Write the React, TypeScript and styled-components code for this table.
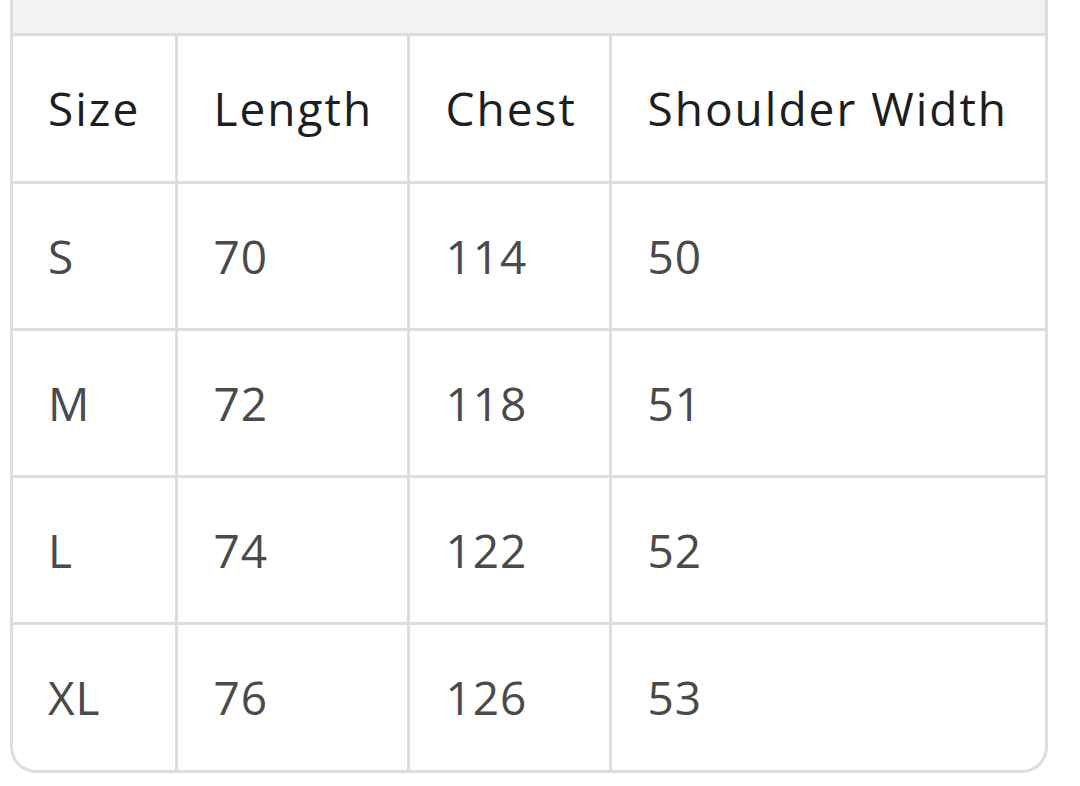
import styled, { createGlobalStyle } from 'styled-components';

// Réglages globaux de la page
const GlobalStyle = createGlobalStyle`
  html, body {
    margin: 0;
    padding: 0;
    background: #ffffff;
  }
  body {
    font-family: "Open Sans", "Noto Sans", "Liberation Sans", sans-serif;
  }
`;

// Cadre du tableau, coins arrondis en bas
const Frame = styled.div`
  margin-left: 10px;
  width: 1038px;
  box-sizing: border-box;
  border: 3px solid #dddddd;
  border-top: none;
  border-radius: 0 0 26px 26px;
  overflow: hidden;
  background: #ffffff;
`;

// Bande grise au-dessus (haut du bloc coupé)
const TopBand = styled.div`
  height: 33px;
  background: #f2f2f2;
  border-bottom: 3px solid #dddddd;
`;

const Table = styled.table`
  width: 100%;
  border-collapse: collapse;
  table-layout: fixed;
`;

const Row = styled.tr<{ $head?: boolean }>`
  height: ${p => (p.$head ? 146 : 147)}px;
`;

const HeadCell = styled.th`
  box-sizing: border-box;
  padding: 0 0 0 36px;
  text-align: left;
  font-size: 46px;
  font-weight: 400;
  letter-spacing: 2px;
  color: #1e1e1e;
  white-space: nowrap;
  border-left: 3px solid #dddddd;
  &:first-child {
    border-left: none;
    padding-left: 35px;
  }
`;

const Cell = styled.td`
  box-sizing: border-box;
  padding: 0 0 0 36px;
  font-size: 46px;
  font-weight: 400;
  letter-spacing: 1px;
  color: #4a4a4a;
  border-left: 3px solid #dddddd;
  border-top: 3px solid #dddddd;
  &:first-child {
    border-left: none;
    padding-left: 35px;
  }
`;

const columns = [
  { label: 'Size', width: 163 },
  { label: 'Length', width: 232 },
  { label: 'Chest', width: 202 },
  { label: 'Shoulder Width' },
];

const rows = [
  ['S', '70', '114', '50'],
  ['M', '72', '118', '51'],
  ['L', '74', '122', '52'],
  ['XL', '76', '126', '53'],
];

const App = () => (
  <>
    <GlobalStyle />
    <Frame>
      <TopBand />
      <Table>
        <colgroup>
          {columns.map(c => (
            <col key={c.label} style={c.width ? { width: c.width } : undefined} />
          ))}
        </colgroup>
        <thead>
          <Row $head>
            {columns.map(c => (
              <HeadCell key={c.label}>{c.label}</HeadCell>
            ))}
          </Row>
        </thead>
        <tbody>
          {rows.map(r => (
            <Row key={r[0]}>
              {r.map((v, i) => (
                <Cell key={i}>{v}</Cell>
              ))}
            </Row>
          ))}
        </tbody>
      </Table>
    </Frame>
  </>
);

export default App;
